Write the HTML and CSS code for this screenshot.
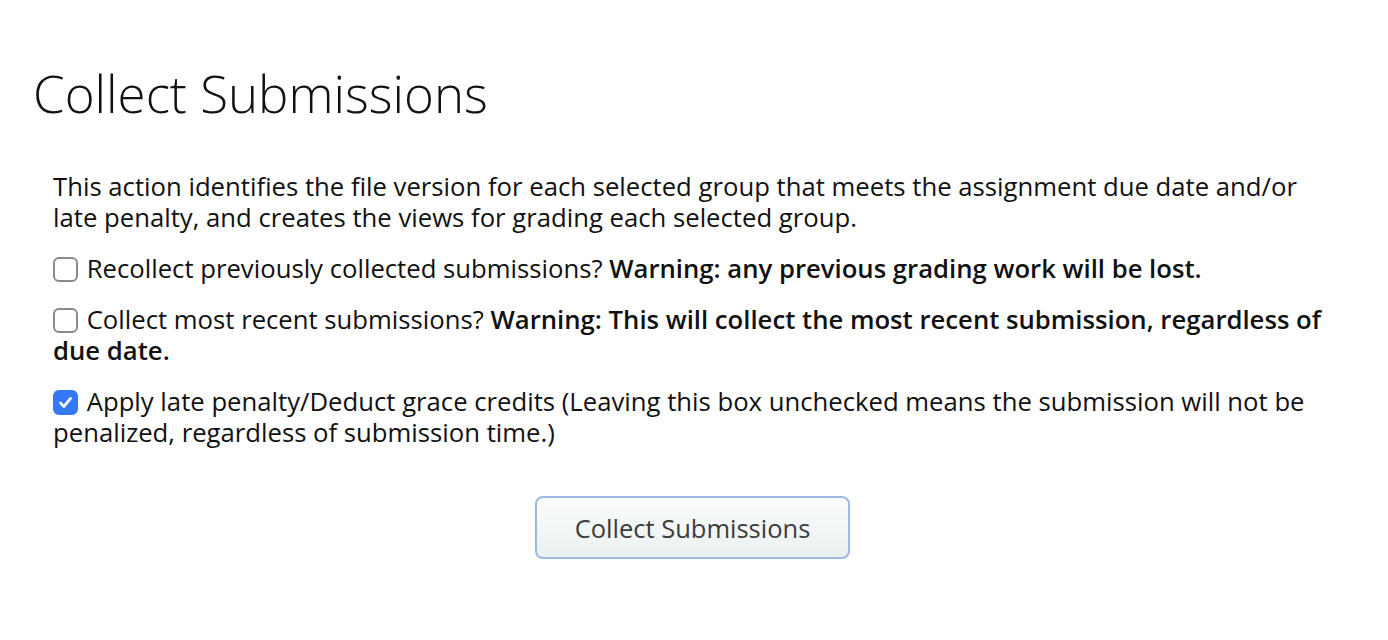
FILE: index.html
```html
<!DOCTYPE html>
<html>
<head>
<meta charset="utf-8">
<link rel="stylesheet" href="styles.css">
</head>
<body>
<main class="page">
  <h1 class="title">Collect Submissions</h1>
  <section class="content">
    <p class="intro">This action identifies the file version for each selected group that meets the assignment due date and/or late penalty, and creates the views for grading each selected group.</p>
    <p class="option"><label><input type="checkbox" class="box"> Recollect previously collected submissions? <strong>Warning: any previous grading work will be lost.</strong></label></p>
    <p class="option"><label><input type="checkbox" class="box"> Collect most recent submissions? <strong>Warning: This will collect the most recent submission, regardless of due date.</strong></label></p>
    <p class="option"><label><input type="checkbox" class="box" checked> Apply late penalty/Deduct grace credits (Leaving this box unchecked means the submission will not be penalized, regardless of submission time.)</label></p>
    <div class="actions">
      <button class="btn" type="button">Collect Submissions</button>
    </div>
  </section>
</main>
</body>
</html>
```
FILE: styles.css
```css
html, body {
  margin: 0;
  padding: 0;
  background: #ffffff;
}
body {
  font-family: "Open Sans", "Liberation Sans", sans-serif;
  color: #111;
}
.page {
  padding: 60px 53px 0 33px;
}
.title {
  margin: 0;
  font-weight: 300;
  font-size: 51px;
  line-height: 66px;
  color: #111;
}
.content {
  padding: 45px 0 0 20px;
  font-size: 25.7px;
  line-height: 31px;
}
.content p {
  margin: 0 0 20px 0;
}
.content strong {
  font-weight: 600;
}
.box {
  appearance: none;
  -webkit-appearance: none;
  width: 25px;
  height: 25px;
  margin: 0 2px 0 0;
  border: 2px solid #8a8a8a;
  border-radius: 6px;
  vertical-align: -4px;
  background: #fff;
  box-sizing: border-box;
}
.box:checked {
  background: #3478f6 url("data:image/svg+xml;utf8,<svg xmlns='http://www.w3.org/2000/svg' viewBox='0 0 25 25'><path d='M6.5 13l4 4.5 8-10' fill='none' stroke='white' stroke-width='3.2' stroke-linecap='round' stroke-linejoin='round'/></svg>") center/100% 100% no-repeat;
  border-color: #3478f6;
}
.actions {
  display: flex;
  justify-content: center;
  padding-top: 28px;
  padding-right: 3px;
}
.btn {
  width: 315px;
  height: 63px;
  font-family: "Open Sans", "Liberation Sans", sans-serif;
  font-size: 25.5px;
  color: #3c3c3c;
  border: 2px solid #9db9e2;
  border-radius: 8px;
  background: linear-gradient(#fcfdfd, #eaf0f0);
  box-shadow: 0 1px 2px rgba(0,0,0,0.08);
}
```
